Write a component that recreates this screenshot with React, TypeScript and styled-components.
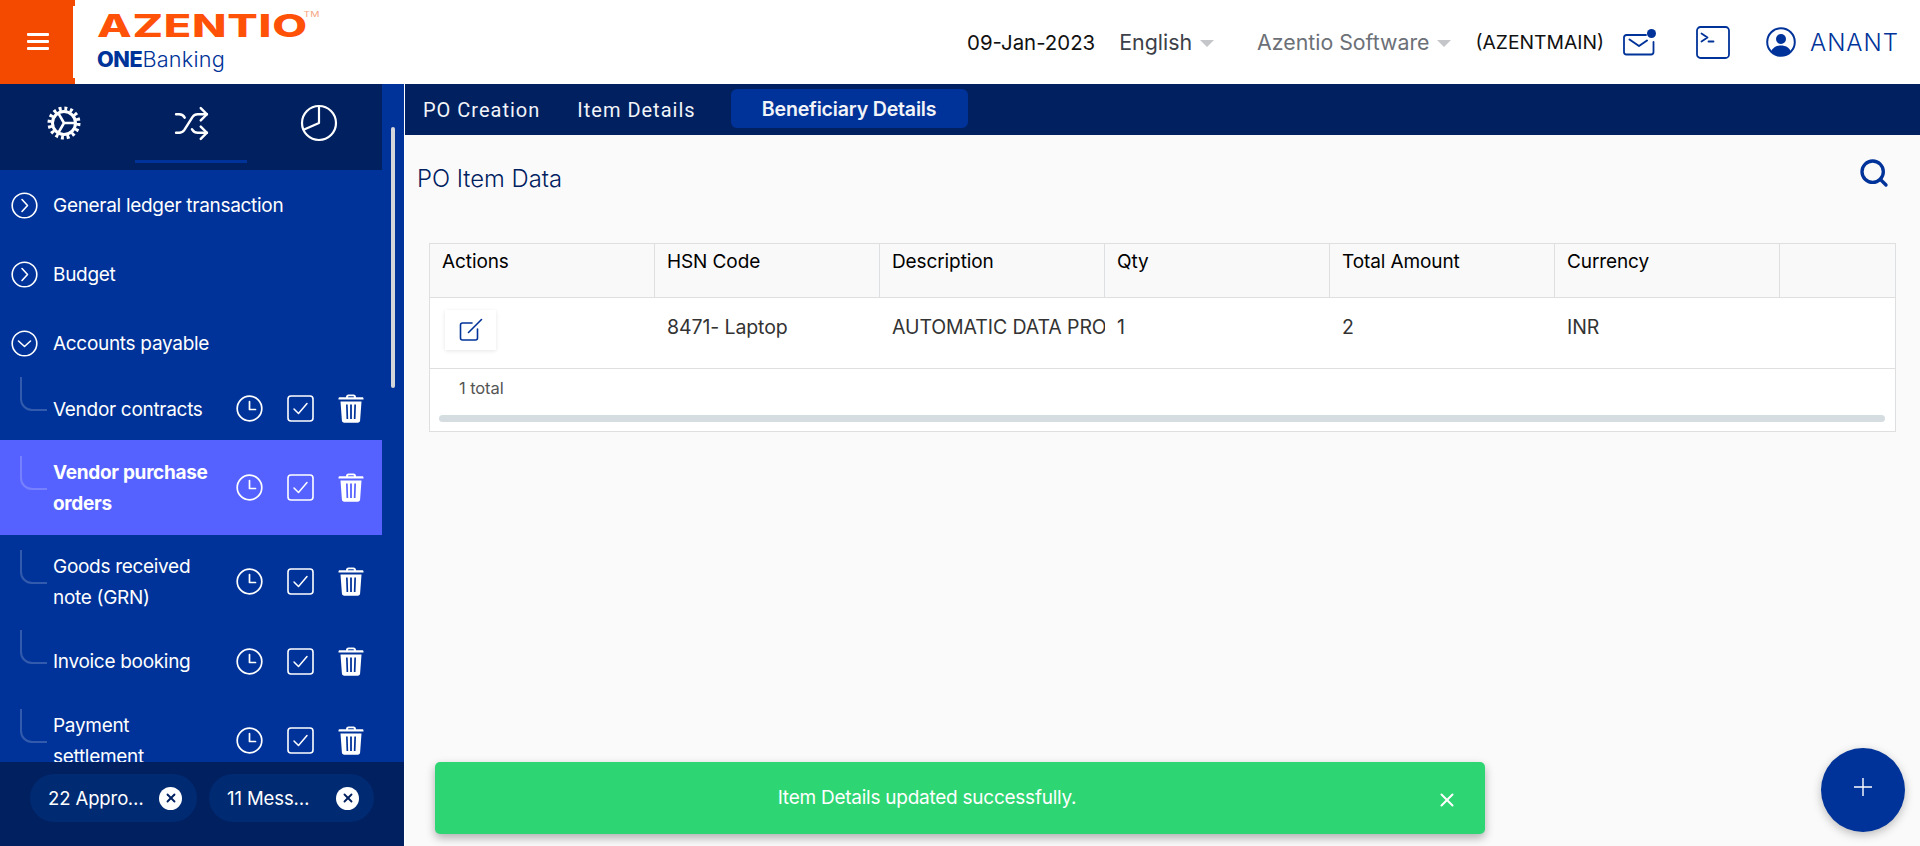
import React from 'react';
import styled, { createGlobalStyle } from 'styled-components';
import { Search, Shuffle, X } from 'lucide-react';

const GlobalStyle = createGlobalStyle`
  html, body {
    margin: 0;
    padding: 0;
    background: #fafafa;
  }
  * {
    box-sizing: border-box;
  }
  body {
    font-family: Inter, "Liberation Sans", sans-serif;
  }
`;

const Page = styled.div`
  position: relative;
  display: flex;
  flex-direction: column;
  width: 1920px;
  height: 846px;
  overflow: hidden;
`;

// Top header
const Header = styled.header`
  display: flex;
  align-items: center;
  height: 84px;
  flex: none;
  background: #fff;
`;

const MenuBox = styled.div`
  position: relative;
  display: flex;
  align-items: center;
  justify-content: center;
  width: 75px;
  height: 84px;
  flex: none;
  background: #f44a00;

  &::after {
    content: '';
    position: absolute;
    right: 0;
    top: 6px;
    bottom: 6px;
    width: 2px;
    background: #fff;
  }
`;

const Burger = styled.div`
  display: flex;
  flex-direction: column;
  gap: 4px;
  margin-top: -1px;

  span {
    display: block;
    width: 22px;
    height: 3px;
    background: #fff;
    border-radius: 1px;
  }
`;

const Logo = styled.div`
  display: flex;
  flex-direction: column;
  margin-left: 22px;
  width: 240px;
`;

const LogoMark = styled.div`
  position: relative;
  font-size: 31px;
  line-height: 28px;
  font-weight: 800;
  color: #ff5208;
  letter-spacing: 0.5px;
  transform: scaleX(1.455);
  transform-origin: left center;
  white-space: nowrap;

  sup {
    position: absolute;
    left: 142px;
    top: -1px;
    font-size: 7px;
    line-height: 8px;
    font-weight: 400;
    color: #f7a582;
    letter-spacing: 0;
  }
`;

const LogoSub = styled.div`
  margin-top: 6px;
  font-size: 21.7px;
  line-height: 26px;
  font-weight: 300;
  color: #003399;
  letter-spacing: 0.2px;

  b {
    font-weight: 800;
    letter-spacing: -0.4px;
  }
`;

const HeaderRight = styled.div`
  display: flex;
  align-items: center;
  margin-left: auto;
  padding-right: 21px;
`;

const HeaderText = styled.span<{ $size: number; $color: string; $left: number }>`
  margin-left: ${props => props.$left}px;
  font-size: ${props => props.$size}px;
  color: ${props => props.$color};
  white-space: nowrap;
`;

const Caret = styled.span`
  width: 0;
  height: 0;
  margin-left: 8px;
  margin-top: 2px;
  border-left: 7px solid transparent;
  border-right: 7px solid transparent;
  border-top: 7px solid #c4c6ca;
`;

const HeaderIcon = styled.span<{ $left: number }>`
  display: flex;
  margin-left: ${props => props.$left}px;
`;

const UserName = styled.span`
  margin-left: 14px;
  font-size: 24px;
  font-weight: 300;
  letter-spacing: 1px;
  color: #003399;
`;

// Body below the header
const Body = styled.div`
  display: flex;
  flex: 1;
  min-height: 0;
`;

const Sidebar = styled.aside`
  position: relative;
  display: flex;
  flex-direction: column;
  width: 405px;
  flex: none;
  background: #003399;
  border-right: 1px solid #fff;
`;

const SideTabs = styled.div`
  display: grid;
  grid-template-columns: 128px 127px 127px;
  width: 382px;
  height: 86px;
  flex: none;
  background: #002060;
`;

const SideTab = styled.div<{ $active?: boolean }>`
  position: relative;
  display: flex;
  align-items: center;
  justify-content: center;
  padding-bottom: 8px;
  color: #fff;

  ${props => props.$active && `
    &::after {
      content: '';
      position: absolute;
      left: 7px;
      right: 8px;
      bottom: 7px;
      height: 3px;
      background: #003399;
    }
  `}
`;

const ScrollThumb = styled.div`
  position: absolute;
  left: 391px;
  top: 43px;
  width: 4px;
  height: 261px;
  border-radius: 2px;
  background: #d4d6da;
`;

const MenuList = styled.div`
  flex: 1;
  min-height: 0;
  width: 382px;
  padding-top: 1px;
  overflow: hidden;
`;

const GroupRow = styled.div`
  display: flex;
  align-items: center;
  gap: 15px;
  height: 69px;
  padding-left: 11px;
  font-size: 19px;
  color: #fff;
  letter-spacing: -0.3px;
`;

const ItemRow = styled.div<{ $height: number; $active?: boolean }>`
  position: relative;
  display: flex;
  align-items: center;
  flex: none;
  height: ${props => props.$height}px;
  padding: 0 18px 0 53px;
  background: ${props => (props.$active ? '#5562ff' : 'transparent')};

  &::before {
    content: '';
    position: absolute;
    left: 20px;
    top: calc(50% - 32px);
    width: 25px;
    height: 32px;
    border-left: 2px solid rgba(255, 255, 255, 0.2);
    border-bottom: 2px solid rgba(255, 255, 255, 0.2);
    border-bottom-left-radius: 12px;
  }
`;

const ItemLabel = styled.div<{ $active?: boolean }>`
  width: 170px;
  margin-right: 13px;
  flex: none;
  font-size: 19px;
  line-height: 31px;
  font-weight: ${props => (props.$active ? 700 : 400)};
  letter-spacing: -0.3px;
  color: #fff;
`;

const ItemIcons = styled.div`
  display: flex;
  align-items: center;
  gap: 24px;
  margin-top: -1px;
`;

const SideFooter = styled.div`
  display: flex;
  gap: 12px;
  height: 84px;
  flex: none;
  padding: 12px 0 0 30px;
  background: #002060;
`;

const Chip = styled.div<{ $width: number; $gap: number }>`
  display: flex;
  align-items: center;
  gap: ${props => props.$gap}px;
  width: ${props => props.$width}px;
  height: 48px;
  padding: 0 15px 0 18px;
  border-radius: 24px;
  background: #002a72;
  color: #fff;
  font-size: 18.5px;
  letter-spacing: -0.1px;
`;

const ChipText = styled.span`
  flex: 1;
  min-width: 0;
  white-space: nowrap;
  overflow: hidden;
  text-overflow: ellipsis;
`;

const ChipClose = styled.span`
  display: flex;
  align-items: center;
  justify-content: center;
  width: 23px;
  height: 23px;
  flex: none;
  border-radius: 50%;
  background: #fff;
  color: #002060;
`;

// Main panel
const Main = styled.main`
  display: flex;
  flex-direction: column;
  flex: 1;
  min-width: 0;
  background: #fafafa;
`;

const TabBar = styled.nav`
  display: flex;
  align-items: center;
  height: 51px;
  flex: none;
  padding-left: 18px;
  background: #002060;
`;

const TabItem = styled.div<{ $active?: boolean }>`
  display: flex;
  align-items: center;
  justify-content: center;
  color: #f2f4f8;
  white-space: nowrap;

  ${props => props.$active ? `
    width: 237px;
    height: 39px;
    margin-top: -2px;
    margin-left: -2px;
    border-radius: 6px;
    background: #003399;
    font-size: 19.6px;
    font-weight: 600;
    letter-spacing: -0.2px;
  ` : `
    margin-right: 37px;
    margin-top: 1px;
    font-family: Roboto, sans-serif;
    font-size: 20px;
    letter-spacing: 1px;
  `}
`;

const Content = styled.section`
  flex: 1;
  min-height: 0;
  padding: 0 24px 0 24px;
`;

const TitleRow = styled.div`
  display: flex;
  align-items: flex-start;
  justify-content: space-between;
  height: 108px;
  padding: 26px 6px 0 0;
  margin-left: -12px;
`;

const Title = styled.h1`
  margin: 0;
  font-size: 23.8px;
  line-height: 36px;
  font-weight: 300;
  color: #002060;
`;

const SearchIcon = styled(Search)`
  margin-top: -4px;
  color: #003399;
`;

const TableBox = styled.div`
  height: 189px;
  background: #fff;
  border: 1px solid #dedfe0;
`;

const TableRow = styled.div<{ $head?: boolean }>`
  display: grid;
  grid-template-columns: repeat(6, 225px) 1fr;
  height: ${props => (props.$head ? '54px' : '71px')};
  background: ${props => (props.$head ? '#f9f9f9' : '#fff')};
  border-bottom: 1px solid #dedfe0;
`;

const HeadCell = styled.div`
  padding: 7px 12px 0;
  font-size: 19px;
  line-height: 22px;
  letter-spacing: -0.1px;
  color: #000;
  border-right: 1px solid #dedfe0;

  &:last-child {
    border-right: none;
  }
`;

const Cell = styled.div`
  display: flex;
  align-items: center;
  padding-left: 12px;
  padding-bottom: 12px;
  font-size: 19.5px;
  letter-spacing: -0.1px;
  color: #333;
  white-space: nowrap;
  overflow: hidden;
`;

const EditButton = styled.div`
  display: flex;
  align-items: center;
  justify-content: center;
  width: 51px;
  height: 40px;
  margin-left: 3px;
  margin-top: 6px;
  background: #fff;
  box-shadow: 0 1px 4px rgba(0, 0, 0, 0.1);
  color: #003399;
`;

const TableFooter = styled.div`
  padding: 9px 29px 0;
  font-size: 16.5px;
  line-height: 20px;
  letter-spacing: -0.1px;
  color: #555;
`;

const HScroll = styled.div`
  height: 7px;
  margin: 17px 10px 0 9px;
  border-radius: 4px;
  background: #d6dde1;
`;

// Overlays
const Toast = styled.div`
  position: absolute;
  left: 435px;
  top: 762px;
  display: flex;
  align-items: center;
  justify-content: center;
  width: 1050px;
  height: 72px;
  padding: 0 66px 2px 0;
  border-radius: 5px;
  background: #2ed573;
  color: #fff;
  font-size: 19px;
  letter-spacing: -0.25px;
  box-shadow: 0 4px 10px rgba(0, 0, 0, 0.3);
`;

const ToastClose = styled(X)`
  position: absolute;
  right: 27px;
  top: 27px;
  color: #fff;
`;

const Fab = styled.div`
  position: absolute;
  left: 1821px;
  top: 748px;
  display: flex;
  align-items: center;
  justify-content: center;
  width: 84px;
  height: 84px;
  padding-bottom: 6px;
  border-radius: 50%;
  background: #003399;
  box-shadow: 0 3px 10px rgba(0, 0, 0, 0.25);
  color: #fff;
`;

const ChevronCircle: React.FC<{ open?: boolean }> = ({ open }) => (
  <svg width="27" height="27" viewBox="0 0 27 27" fill="none" stroke="#fff" strokeWidth="1.6" strokeLinecap="round" strokeLinejoin="round">
    <circle cx="13.5" cy="13.5" r="12.3" />
    <path d={open ? 'M7.5 11l6 5.5 6-5.5' : 'M11 7.5l5.5 6-5.5 6'} />
  </svg>
);

const ClockIcon = () => (
  <svg width="27" height="27" viewBox="0 0 27 27" fill="none" stroke="#fff" strokeWidth="1.7" strokeLinecap="round" strokeLinejoin="round">
    <circle cx="13.5" cy="13.5" r="12.3" />
    <path d="M13.5 6.5v8h6" />
  </svg>
);

const CheckIcon = () => (
  <svg width="27" height="27" viewBox="0 0 27 27" fill="none" stroke="#fff" strokeLinecap="round" strokeLinejoin="round">
    <rect x="1" y="1" width="25" height="25" rx="3" strokeWidth="1.6" />
    <path d="M7 14l4.5 4.5L20 8.5" strokeWidth="1.5" />
  </svg>
);

const TrashIcon = () => (
  <svg width="26" height="29" viewBox="0 0 26 29">
    <path fillRule="evenodd" fill="#fff" d="M8 3.2C8 1.4 9 .5 10.5.5h5C17 .5 18 1.4 18 3.2h6.2c.7 0 1.3.6 1.3 1.2v1.2H.5V4.400c0-.6.6-1.200 1.300-1.200zM10 3.200h6c0-.6-.3-.9-.8-.9h-4.400c-.5 0-.8.3-.8.900zM2.500 7.500h21l-1.400 19c-.1 1.300-1.100 2.200-2.300 2.200H6.200c-1.200 0-2.200-.9-2.300-2.200zM8 10.500l.5 14.500h1.700L9.700 10.500zM12.100 10.500V25h1.800V10.500zM16.300 10.500L15.800 25h1.700l.5-14.500z" />
  </svg>
);

const GearIcon = () => (
  <svg width="34" height="34" viewBox="0 0 34 34" fill="none" stroke="#fff">
    <circle cx="17" cy="17" r="11.500" strokeWidth="3" />
    <circle cx="17" cy="17" r="14.500" strokeWidth="4" strokeDasharray="2.900 2.790" />
    <path d="M17 17H29M17 17L11 6.600M17 17L11 27.400" strokeWidth="2.600" />
  </svg>
);

const PieIcon = () => (
  <svg width="38" height="38" viewBox="0 0 38 38" fill="none" stroke="#fff" strokeWidth="2.200" strokeLinejoin="round">
    <circle cx="19" cy="19" r="17" />
    <path d="M19 2v17L3 26" />
  </svg>
);

const MailIcon = () => (
  <svg width="33" height="27" viewBox="0 0 33 27" fill="none" stroke="#003399" strokeWidth="1.800" strokeLinecap="round" strokeLinejoin="round">
    <path d="M23 6H3.500C2 6 1 7 1 8.500v14.500C1 24.800 2 25.500 3.500 25.500h24.500c1.500 0 2.500-.7 2.500-2.500V13" />
    <path d="M6.500 10.500l9.500 6.500 8-5.500" strokeWidth="2" />
    <circle cx="28.500" cy="4.500" r="4.500" fill="#003399" stroke="none" />
  </svg>
);

const TerminalIcon = () => (
  <svg width="34" height="33" viewBox="0 0 34 33" fill="none" stroke="#003399" strokeWidth="1.800" strokeLinecap="round" strokeLinejoin="round">
    <rect x="1" y="1" width="32" height="31" rx="3.500" />
    <path d="M5.500 7.500l6 4-6 4M12.500 15.500h5" />
  </svg>
);

const UserIcon = () => (
  <svg width="30" height="30" viewBox="0 0 30 30">
    <circle cx="15" cy="15" r="13.800" fill="none" stroke="#003399" strokeWidth="2" />
    <circle cx="15" cy="12" r="5" fill="#003399" />
    <path d="M5 25c1.500-4.500 5.500-6.500 10-6.500s8.500 2 10 6.500c-2.500 2.500-6 4-10 4s-7.500-1.500-10-4z" fill="#003399" />
  </svg>
);

const EditIcon = () => (
  <svg width="24" height="24" viewBox="0 0 24 24" fill="none" stroke="currentColor" strokeWidth="1.600" strokeLinecap="round" strokeLinejoin="round">
    <path d="M13 5H3.500C2.300 5 1.500 5.800 1.500 7v13c0 1.200.8 2 2 2h13c1.200 0 2-.8 2-2v-9" />
    <path d="M9.500 14.500L22.500 1.500" />
  </svg>
);

const items = [
  { label: 'Vendor contracts', height: 62 },
  { label: 'Vendor purchase orders', height: 95, active: true },
  { label: 'Goods received note (GRN)', height: 93 },
  { label: 'Invoice booking', height: 67 },
  { label: 'Payment settlement', height: 92 },
];

const columns = ['Actions', 'HSN Code', 'Description', 'Qty', 'Total Amount', 'Currency', ''];

const App: React.FC = () => {
  return (
    <Page>
      <GlobalStyle />
      <Header>
        <MenuBox>
          <Burger>
            <span />
            <span />
            <span />
          </Burger>
        </MenuBox>
        <Logo>
          <LogoMark>AZENTIO<sup>TM</sup></LogoMark>
          <LogoSub>
            <b>ONE</b>Banking
          </LogoSub>
        </Logo>
        <HeaderRight>
          <HeaderText $size={20.4} $color="#111" $left={0}>09-Jan-2023</HeaderText>
          <HeaderText $size={21.4} $color="#3c4048" $left={24}>English</HeaderText>
          <Caret />
          <HeaderText $size={21.3} $color="#6c7077" $left={43}>Azentio Software</HeaderText>
          <Caret />
          <HeaderText $size={19.3} $color="#111" $left={24}>(AZENTMAIN)</HeaderText>
          <HeaderIcon $left={19}><MailIcon /></HeaderIcon>
          <HeaderIcon $left={40}><TerminalIcon /></HeaderIcon>
          <HeaderIcon $left={36}><UserIcon /></HeaderIcon>
          <UserName>ANANT</UserName>
        </HeaderRight>
      </Header>

      <Body>
        <Sidebar>
          <SideTabs>
            <SideTab><GearIcon /></SideTab>
            <SideTab $active><Shuffle size={37} strokeWidth={1.6} /></SideTab>
            <SideTab><PieIcon /></SideTab>
          </SideTabs>
          <ScrollThumb />
          <MenuList>
            <GroupRow><ChevronCircle />General ledger transaction</GroupRow>
            <GroupRow><ChevronCircle />Budget</GroupRow>
            <GroupRow><ChevronCircle open />Accounts payable</GroupRow>
            {items.map(item => (
              <ItemRow key={item.label} $height={item.height} $active={item.active}>
                <ItemLabel $active={item.active}>{item.label}</ItemLabel>
                <ItemIcons>
                  <ClockIcon />
                  <CheckIcon />
                  <TrashIcon />
                </ItemIcons>
              </ItemRow>
            ))}
          </MenuList>
          <SideFooter>
            <Chip $width={167} $gap={15}>
              <ChipText>22 Approvals</ChipText>
              <ChipClose><X size={14} strokeWidth={3.2} /></ChipClose>
            </Chip>
            <Chip $width={165} $gap={21}>
              <ChipText>11 Messages</ChipText>
              <ChipClose><X size={14} strokeWidth={3.2} /></ChipClose>
            </Chip>
          </SideFooter>
        </Sidebar>

        <Main>
          <TabBar>
            <TabItem>PO Creation</TabItem>
            <TabItem>Item Details</TabItem>
            <TabItem $active>Beneficiary Details</TabItem>
          </TabBar>
          <Content>
            <TitleRow>
              <Title>PO Item Data</Title>
              <SearchIcon size={32} strokeWidth={2.5} />
            </TitleRow>
            <TableBox>
              <TableRow $head>
                {columns.map((col, i) => (
                  <HeadCell key={i}>{col}</HeadCell>
                ))}
              </TableRow>
              <TableRow>
                <Cell>
                  <EditButton><EditIcon /></EditButton>
                </Cell>
                <Cell>8471- Laptop</Cell>
                <Cell>AUTOMATIC DATA PROCESSING</Cell>
                <Cell>1</Cell>
                <Cell>2</Cell>
                <Cell>INR</Cell>
                <Cell />
              </TableRow>
              <TableFooter>1 total</TableFooter>
              <HScroll />
            </TableBox>
          </Content>
        </Main>
      </Body>

      <Toast>
        Item Details updated successfully.
        <ToastClose size={22} strokeWidth={2.2} />
      </Toast>
      <Fab>
        <svg width="18" height="18" viewBox="0 0 18 18" stroke="#fff" strokeWidth="1.400">
          <path d="M9 0v18M0 9h18" />
        </svg>
      </Fab>
    </Page>
  );
};

export default App;
